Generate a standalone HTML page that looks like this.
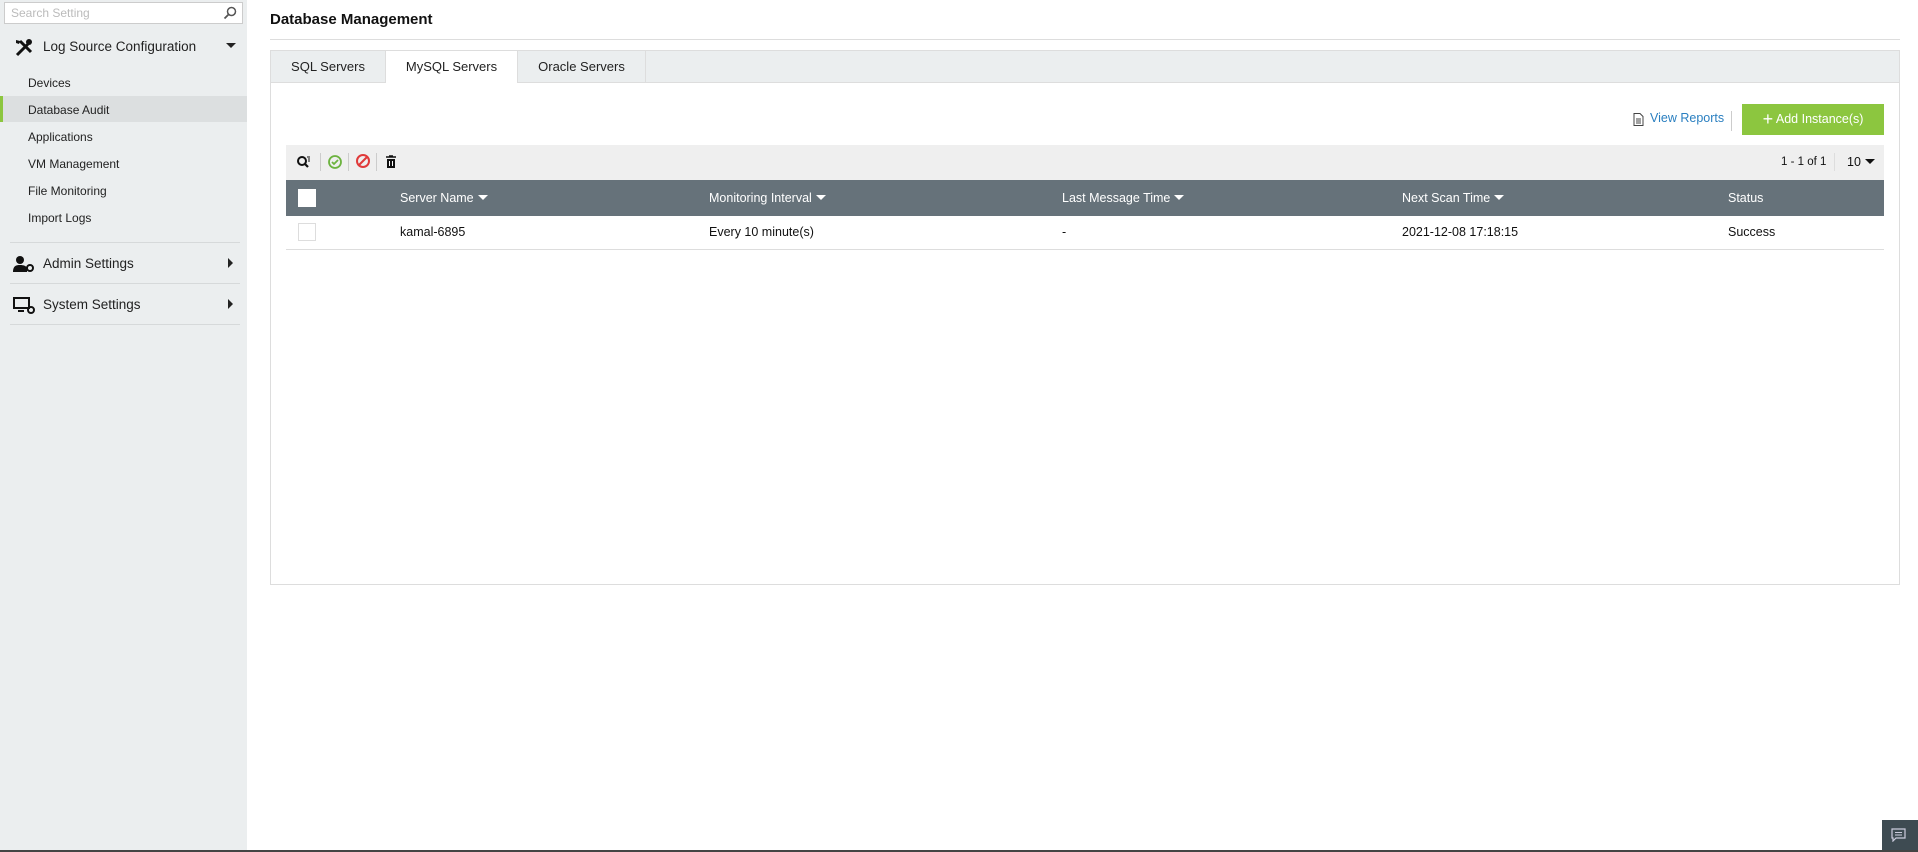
<!DOCTYPE html>
<html><head><meta charset="utf-8"><style>
*{margin:0;padding:0;box-sizing:border-box}
body{width:1918px;height:852px;position:relative;overflow:hidden;background:#fff;font-family:"Liberation Sans",sans-serif;color:#222}
.a{position:absolute}
#side{left:0;top:0;width:247px;height:850px;background:#ebeeef}
.si{position:absolute;left:28px;font-size:12px;color:#222}
.sep{position:absolute;left:10px;width:230px;height:1px;background:#d6d9da}
.big{position:absolute;left:43px;font-size:13.5px;color:#222}
.th{position:absolute;top:180px;height:36px;line-height:36px;color:#fff;font-size:12.5px}
.td{position:absolute;top:216px;height:33px;line-height:33px;font-size:12.5px;color:#111}
.car{display:inline-block;width:0;height:0;border-left:5px solid transparent;border-right:5px solid transparent;border-top:5px solid #fff;margin-left:4px;vertical-align:2px}
</style></head><body>
<div id="side" class="a">
 <div class="a" style="left:4px;top:2px;width:239px;height:22px;background:#fff;border:1px solid #ccc;font-size:12px;color:#bbb;line-height:20px;padding-left:6px">Search Setting
  <svg class="a" style="right:5px;top:3px" width="14" height="14" viewBox="0 0 14 14"><circle cx="8.5" cy="5.5" r="4" fill="none" stroke="#555" stroke-width="1.5"/><path d="M5.5 8.5L1.5 12.5" stroke="#555" stroke-width="1.8"/></svg></div>
 <svg class="a" style="left:14px;top:38px" width="20" height="20" viewBox="0 0 20 20"><path d="M3 17L14 6M6 3l11 11" stroke="#111" stroke-width="3"/><circle cx="15" cy="4" r="3" fill="#111"/><path d="M2 2l4 1-1 3-3-1z" fill="#111"/></svg>
 <div class="big" style="top:39px">Log Source Configuration</div>
 <div class="a" style="left:226px;top:43px;border-left:5px solid transparent;border-right:5px solid transparent;border-top:5px solid #222"></div>
 <div class="si" style="top:76px">Devices</div>
 <div class="a" style="left:0;top:96px;width:247px;height:26px;background:#dcdfe0;border-left:3px solid #8cc63f"></div>
 <div class="si" style="top:103px">Database Audit</div>
 <div class="si" style="top:130px">Applications</div>
 <div class="si" style="top:157px">VM Management</div>
 <div class="si" style="top:184px">File Monitoring</div>
 <div class="si" style="top:211px">Import Logs</div>
 <div class="sep" style="top:242px"></div>
 <svg class="a" style="left:13px;top:255px" width="22" height="18" viewBox="0 0 22 18"><circle cx="7" cy="5" r="4" fill="#111"/><path d="M0 17c0-6 3-7 7-7s6 1 7 3v4z" fill="#111"/><circle cx="17" cy="13" r="3" fill="none" stroke="#111" stroke-width="2"/></svg>
 <div class="big" style="top:256px">Admin Settings</div>
 <div class="a" style="left:228px;top:258px;border-top:5px solid transparent;border-bottom:5px solid transparent;border-left:5px solid #222"></div>
 <div class="sep" style="top:283px"></div>
 <svg class="a" style="left:13px;top:296px" width="22" height="18" viewBox="0 0 22 18"><rect x="1" y="2" width="15" height="10" fill="none" stroke="#111" stroke-width="2"/><path d="M5 15h6" stroke="#111" stroke-width="2"/><circle cx="18" cy="14" r="3" fill="none" stroke="#111" stroke-width="2"/></svg>
 <div class="big" style="top:297px">System Settings</div>
 <div class="a" style="left:228px;top:299px;border-top:5px solid transparent;border-bottom:5px solid transparent;border-left:5px solid #222"></div>
 <div class="sep" style="top:324px"></div>
</div>
<div class="a" style="left:270px;top:11px;font-size:15px;font-weight:bold;color:#111">Database Management</div>
<div class="a" style="left:270px;top:39px;width:1630px;height:1px;background:#ddd"></div>
<div class="a" style="left:270px;top:50px;width:1630px;height:535px;border:1px solid #ddd"></div>
<div class="a" style="left:271px;top:51px;width:1628px;height:32px;background:#ebeeef;border-bottom:1px solid #ddd"></div>
<div class="a" style="left:271px;top:51px;width:115px;height:32px;line-height:32px;text-align:center;font-size:13px;border-right:1px solid #ddd">SQL Servers</div>
<div class="a" style="left:386px;top:51px;width:131px;height:33px;line-height:32px;text-align:center;font-size:13px;background:#fff">MySQL Servers</div>
<div class="a" style="left:517px;top:51px;width:129px;height:32px;line-height:32px;text-align:center;font-size:13px;border-left:1px solid #ddd;border-right:1px solid #ddd">Oracle Servers</div>
<svg class="a" style="left:1633px;top:113px" width="11" height="13" viewBox="0 0 11 13"><path d="M1 .5h6l3 3v9H1z M3 6h5M3 8h5M3 10h5" fill="none" stroke="#444"/></svg>
<div class="a" style="left:1650px;top:111px;font-size:12.5px;color:#2a7fc0">View Reports</div>
<div class="a" style="left:1731px;top:111px;width:1px;height:20px;background:#ccc"></div>
<div class="a" style="left:1742px;top:104px;width:142px;height:31px;background:#8cc63f;color:#fff;font-size:12.5px;line-height:30px;text-align:center"><span style="font-size:18px;vertical-align:-2px">+</span> Add Instance(s)</div>
<div class="a" style="left:286px;top:145px;width:1598px;height:35px;background:#efefef"></div>
<svg class="a" style="left:296px;top:154px" width="16" height="16" viewBox="0 0 16 16"><circle cx="6" cy="7" r="4" fill="none" stroke="#111" stroke-width="2"/><path d="M9 10l3 3" stroke="#111" stroke-width="2.2"/><path d="M11 3h3M12 5h2M12 7h2" stroke="#111"/></svg>
<div class="a" style="left:320px;top:153px;width:1px;height:18px;background:#ccc"></div>
<svg class="a" style="left:327px;top:154px" width="16" height="16"><circle cx="8" cy="8" r="6" fill="none" stroke="#6cb33f" stroke-width="1.8"/><path d="M5 8l2 2 4-4" fill="none" stroke="#6cb33f" stroke-width="1.8"/></svg>
<div class="a" style="left:348px;top:153px;width:1px;height:18px;background:#ccc"></div>
<svg class="a" style="left:355px;top:153px" width="16" height="16"><circle cx="8" cy="8" r="6" fill="none" stroke="#e03a3a" stroke-width="2"/><path d="M4 12l8-8" stroke="#e03a3a" stroke-width="2"/></svg>
<div class="a" style="left:376px;top:153px;width:1px;height:18px;background:#ccc"></div>
<svg class="a" style="left:385px;top:155px" width="12" height="13"><path d="M1 2h10M4 1h4" stroke="#111" stroke-width="1.6"/><path d="M2 4h8v9H2z" fill="#111"/><path d="M4.5 6v5M7.5 6v5" stroke="#fff"/></svg>
<div class="a" style="left:1781px;top:156px;font-size:11.5px;color:#111">1 - 1 of 1</div>
<div class="a" style="left:1834px;top:153px;width:1px;height:18px;background:#ddd"></div>
<div class="a" style="left:1847px;top:155px;font-size:12.5px;color:#111">10<span class="car" style="border-top-color:#111"></span></div>
<div class="a" style="left:286px;top:180px;width:1598px;height:36px;background:#66727a"></div>
<div class="a" style="left:298px;top:189px;width:18px;height:18px;background:#fff"></div>
<div class="th" style="left:400px">Server Name<span class="car"></span></div>
<div class="th" style="left:709px">Monitoring Interval<span class="car"></span></div>
<div class="th" style="left:1062px">Last Message Time<span class="car"></span></div>
<div class="th" style="left:1402px">Next Scan Time<span class="car"></span></div>
<div class="th" style="left:1728px">Status</div>
<div class="a" style="left:298px;top:223px;width:18px;height:18px;border:1px solid #ddd"></div>
<div class="td" style="left:400px">kamal-6895</div>
<div class="td" style="left:709px">Every 10 minute(s)</div>
<div class="td" style="left:1062px">-</div>
<div class="td" style="left:1402px">2021-12-08 17:18:15</div>
<div class="td" style="left:1728px">Success</div>
<div class="a" style="left:286px;top:249px;width:1598px;height:1px;background:#ddd"></div>
<div class="a" style="left:0;top:850px;width:1918px;height:2px;background:#444"></div>
<div class="a" style="left:1882px;top:820px;width:36px;height:30px;background:#3e4b52"></div>
<svg class="a" style="left:1891px;top:828px" width="16" height="14"><path d="M1 1h13v9H5l-3 3v-3H1z" fill="none" stroke="#ccd" stroke-width="1.2"/><path d="M4 4.5h7M4 7h7" stroke="#ccd"/></svg>
</body></html>
